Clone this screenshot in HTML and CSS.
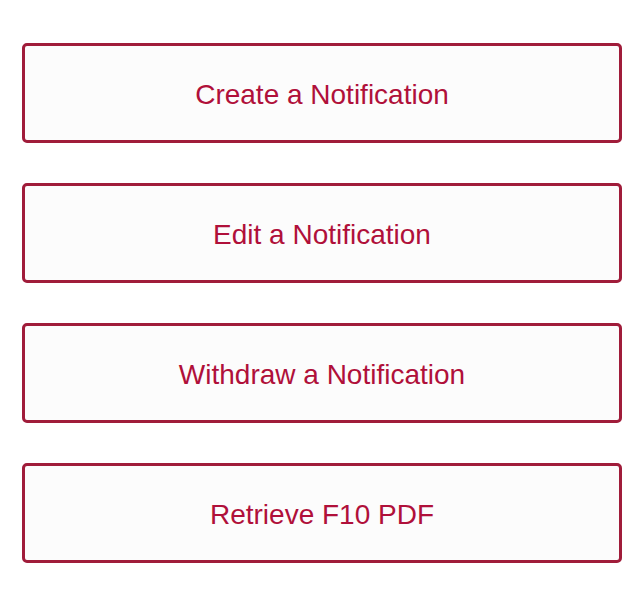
FILE: index.html
```html
<!DOCTYPE html>
<html lang="en">
<head>
<meta charset="utf-8">
<title>Notifications</title>
<link rel="stylesheet" href="styles.css">
</head>
<body>
<div class="menu">
  <button class="action">Create a Notification</button>
  <button class="action">Edit a Notification</button>
  <button class="action">Withdraw a Notification</button>
  <button class="action">Retrieve F10 PDF</button>
</div>
</body>
</html>
```
FILE: styles.css
```css
html, body {
  margin: 0;
  padding: 0;
  background: #ffffff;
}
.menu {
  display: flex;
  flex-direction: column;
  gap: 40px;
  padding: 43px 22px 0 22px;
  width: 600px;
}
.action {
  box-sizing: border-box;
  width: 600px;
  height: 100px;
  margin: 0;
  border: 3px solid #a01c3a;
  border-radius: 5px;
  background: #fcfcfc;
  color: #b0103a;
  font-family: "Liberation Sans", Arial, sans-serif;
  font-size: 28px;
  display: flex;
  align-items: center;
  justify-content: center;
  padding: 3px 0 0 0;
  cursor: pointer;
}
```
